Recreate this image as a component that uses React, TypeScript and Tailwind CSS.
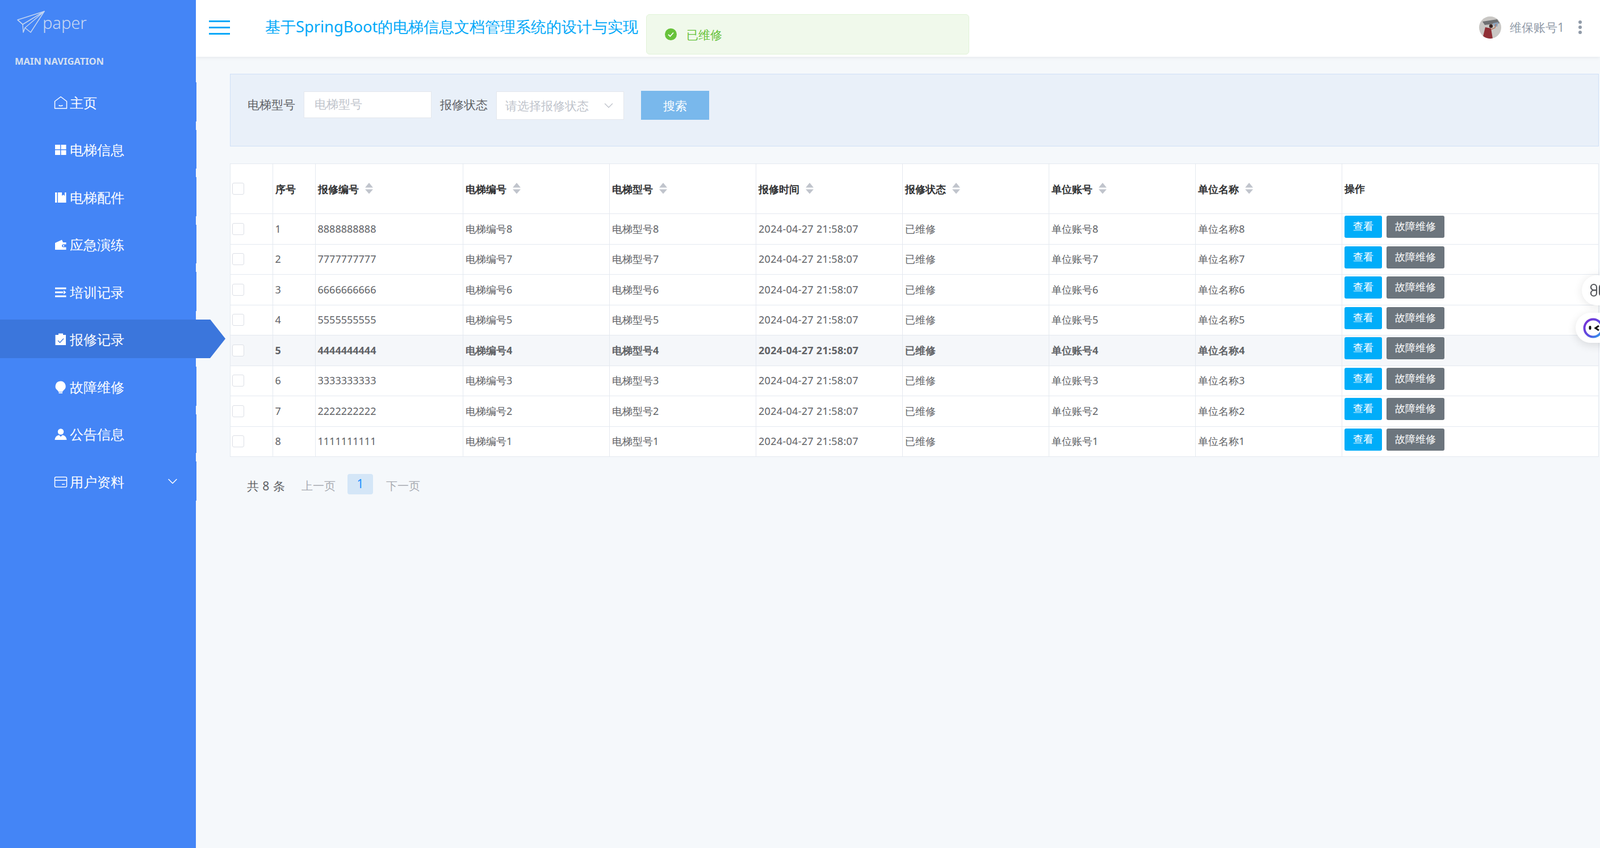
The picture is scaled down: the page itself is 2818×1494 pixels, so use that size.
import React from "react";
import { ChevronDown } from "lucide-react";

const Ico = ({ children }: { children: React.ReactNode }) => (
  <svg width="24" height="24" viewBox="0 0 24 24" className="shrink-0 mr-[4px]" fill="white">{children}</svg>
);

const icons: Record<string, React.ReactNode> = {
  home: (
    <Ico><path d="M12 1.5 L22.5 9.5 V22 H1.5 V9.5 Z" fill="none" stroke="white" strokeWidth="1.5" strokeLinejoin="round" /><path d="M8.5 16.5 q3.5 2.2 7 0" fill="none" stroke="white" strokeWidth="1.5" /></Ico>
  ),
  grid: (
    <Ico><rect x="2" y="3" width="9" height="8" /><rect x="12.5" y="3" width="9" height="8" /><rect x="2" y="12.5" width="9" height="8.5" /><rect x="12.5" y="12.5" width="9" height="8.5" /></Ico>
  ),
  book: (
    <Ico><rect x="2" y="3" width="3.5" height="18" /><path d="M7 3 H14 V9 L16.5 7 L19 9 V3 H21.5 V21 H7 Z" /></Ico>
  ),
  wallet: (
    <Ico><path d="M2 9 L14 3.5 L16 8 H21.5 V11.5 H16.5 a2.5 2.5 0 0 0 0 5 H21.5 V21 H2 Z" /><circle cx="17" cy="14" r="1.2" /></Ico>
  ),
  fold: (
    <Ico><rect x="2" y="3.5" width="19.5" height="3" /><rect x="2" y="10.5" width="14" height="3" /><rect x="2" y="17.5" width="19.5" height="3" /><path d="M17 8.5 L21.5 12 L17 15.5 Z" /></Ico>
  ),
  order: (
    <Ico><path d="M2.5 4 H8 V1.5 H16 V4 H21 V22 H2.5 Z" /><path d="M7 14 L10.5 17.5 L17 10.5" fill="none" stroke="#3b76dc" strokeWidth="1.3" /></Ico>
  ),
  bulb: (
    <Ico><path d="M11.5 1.5 a9 9 0 0 1 6 15.8 c-1.3 1.1 -2 2 -2.3 3.2 H8 c-0.4 -1.2 -1 -2.1 -2.3 -3.2 A9 9 0 0 1 11.5 1.5 Z" /><rect x="8.5" y="21.3" width="6.5" height="1.8" /></Ico>
  ),
  user: (
    <Ico><circle cx="12" cy="7.5" r="5.2" /><path d="M1.5 22 C2 16 6 14 9 13.5 L12 16.5 L15 13.5 C18 14 22 16 22.5 22 Z" /></Ico>
  ),
  card: (
    <Ico><rect x="1.5" y="3.5" width="21" height="17.5" rx="2" fill="none" stroke="white" strokeWidth="1.5" /><rect x="1.5" y="8.5" width="21" height="1.5" /><rect x="14" y="15.5" width="5" height="1.5" /></Ico>
  ),
};

const menu = [
  ["home", "主页"],
  ["grid", "电梯信息"],
  ["book", "电梯配件"],
  ["wallet", "应急演练"],
  ["fold", "培训记录"],
  ["order", "报修记录"],
  ["bulb", "故障维修"],
  ["user", "公告信息"],
  ["card", "用户资料"],
];

const Sort = () => (
  <svg width="14" height="20" viewBox="0 0 14 20" className="ml-[11px] shrink-0 -mt-[2px]" fill="#c0c4cc">
    <path d="M7 0 L14 8.5 H0 Z" />
    <path d="M0 11.5 H14 L7 19.5 Z" />
  </svg>
);

const heads: [string, boolean][] = [
  ["序号", false],
  ["报修编号", true],
  ["电梯编号", true],
  ["电梯型号", true],
  ["报修时间", true],
  ["报修状态", true],
  ["单位账号", true],
  ["单位名称", true],
];

const Check = () => <div className="w-[21px] h-[21px] rounded-[3px] border border-[#dcdfe6] bg-white" />;

const rows = [8, 7, 6, 5, 4, 3, 2, 1];

export default function App() {
  return (
    <div className="flex w-[2818px] h-[1494px] overflow-hidden bg-[#f5f8fb] font-['Noto_Sans','Noto_Sans_CJK_SC',sans-serif]">
      <aside className="relative z-20 w-[345px] shrink-0 bg-[#4485f6] text-white">
        <div className="h-[145px]">
          <div className="flex items-start pl-[30px] pt-[19px] h-[90px]">
            <svg width="50" height="40" viewBox="0 0 50 40" fill="none" stroke="#c4d5f0" strokeWidth="1.5" strokeLinejoin="round">
              <path d="M1 16 L48 1 L24 38 L14 30 L11 38 L10 24 Z" />
              <path d="M1 16 L10 24 L48 1 L14 30" />
            </svg>
            <span className="font-['Roboto'] font-light text-[29px] leading-[40px] text-[#c9d9f2] -ml-[5px] mt-[1px]">paper</span>
          </div>
          <div className="pl-[26px] text-[16.5px] leading-[20px] font-bold font-['Roboto'] text-[#d5e0f1] mt-[8px]">MAIN NAVIGATION</div>
        </div>
        {menu.map(([ic, label], i) => {
          const active = i === 5;
          return (
            <div
              key={label}
              className={
                active
                  ? "flex items-center h-[68.5px] mb-[15px] w-[397px] pl-[95px] pt-[3px] bg-[#3b76dc] [clip-path:polygon(0_0,370px_0,397px_50%,370px_100%,0_100%)]"
                  : "relative flex items-center h-[68.5px] mb-[15px] w-[346px] pl-[95px] pt-[3px] bg-[#4485f6]"
              }
            >
              {icons[ic]}
              <span className="text-[24px] leading-[32px]">{label}</span>
              {i === 8 && <ChevronDown className="absolute left-[290px] top-[21px]" size={28} strokeWidth={1.3} color="white" />}
            </div>
          );
        })}
      </aside>

      <div className="relative flex-1 min-w-0">
        <header className="relative z-10 h-[100px] bg-white shadow-[0_2px_6px_rgba(0,0,0,0.06)] flex items-center pl-[23px] pr-[32px]">
          <div className="flex flex-col gap-[8px] w-[37px] mb-[4px]">
            <div className="h-[3px] bg-[#00a8f8]" />
            <div className="h-[3px] bg-[#00a8f8]" />
            <div className="h-[3px] bg-[#00a8f8]" />
          </div>
          <div className="ml-[62px] text-[27.3px] leading-[40px] text-[#00a8f8] mb-[6px] whitespace-nowrap">基于SpringBoot的电梯信息文档管理系统的设计与实现</div>
          <div className="ml-auto flex items-center mb-[4px]">
            <svg width="39" height="39" viewBox="0 0 39 39" className="rounded-full">
              <rect width="39" height="39" fill="#c9c7c4" />
              <path d="M6 9 L32 5 L36 12 L10 15 Z" fill="#6f7072" />
              <path d="M24 12 L34 10 L32 18 L26 17 Z" fill="#8ba3bd" />
              <path d="M6 39 L11 19 L21 21 L24 39 Z" fill="#8f2f35" />
              <circle cx="21" cy="17" r="3.2" fill="#3a2420" />
              <path d="M21 23 L28 20 L30 13" stroke="#b77a60" strokeWidth="1.5" fill="none" />
            </svg>
            <span className="ml-[15px] text-[21px] leading-[28px] text-[#909aa8]">维保账号1</span>
            <div className="ml-[25px] flex flex-col gap-[3px]">
              <div className="w-[6px] h-[6px] rounded-full bg-[#909aa8]" />
              <div className="w-[6px] h-[6px] rounded-full bg-[#909aa8]" />
              <div className="w-[6px] h-[6px] rounded-full bg-[#909aa8]" />
            </div>
          </div>
        </header>

        <div className="absolute z-30 left-[793px] top-[25px] w-[569px] h-[71px] rounded-[6px] bg-[#f0f9eb] border border-[#e1f3d8] flex items-center pl-[32px]">
          <svg width="21" height="21" viewBox="0 0 21 21">
            <circle cx="10.5" cy="10.5" r="10.5" fill="#67c23a" />
            <path d="M6 10.8 L9.3 14 L15 7.5" fill="none" stroke="white" strokeWidth="1.8" />
          </svg>
          <span className="ml-[17px] text-[21px] leading-[28px] text-[#67c23a]">已维修</span>
        </div>

        <main className="pl-[60px] pr-[2px] pt-[30px]">
          <div className="h-[128px] bg-[#e9f0f9] border border-[#cfdff7] flex items-start pl-[30px] pt-[30px]">
            <span className="text-[21px] leading-[47px] text-[#606266]">电梯型号</span>
            <div className="ml-[15px] w-[225px] h-[47px] bg-white border border-[#e4e7ed] pl-[18px] text-[21px] leading-[43px] text-[#c0c4cc]">电梯型号</div>
            <span className="ml-[15px] text-[21px] leading-[47px] text-[#606266]">报修状态</span>
            <div className="ml-[15px] w-[225px] h-[50px] bg-white border border-[#e4e7ed] pl-[15px] pr-[13px] flex items-center justify-between text-[21px] text-[#c0c4cc]">
              <span className="leading-[28px]">请选择报修状态</span>
              <ChevronDown size={26} strokeWidth={1.3} />
            </div>
            <button className="ml-[30px] w-[120px] h-[51px] -mt-[1px] bg-[#79b8ec] text-white text-[21px] leading-[28px]">搜索</button>
          </div>

          <table className="mt-[30px] w-[2411px] table-fixed border-collapse bg-white border border-[#e4e9f0] text-[18px] text-[#606266]">
            <colgroup>
              <col className="w-[74.5px]" />
              <col className="w-[75px]" />
              <col className="w-[260.5px]" />
              <col className="w-[258px]" />
              <col className="w-[258px]" />
              <col className="w-[258px]" />
              <col className="w-[258px]" />
              <col className="w-[258px]" />
              <col className="w-[258px]" />
              <col />
            </colgroup>
            <thead>
              <tr className="h-[88px] text-[#303133]">
                <th className="border border-[#e4e9f0] pl-[3px] text-left align-middle"><Check /></th>
                {heads.map(([h, sort]) => (
                  <th key={h} className="border border-[#e4e9f0] pl-[4px] text-left align-middle font-bold">
                    <div className="flex items-center">
                      <span className="leading-[24px]">{h}</span>
                      {sort && <Sort />}
                    </div>
                  </th>
                ))}
                <th className="border border-[#e4e9f0] pl-[4px] text-left align-middle font-bold">操作</th>
              </tr>
            </thead>
            <tbody>
              {rows.map((n, i) => {
                const bold = i === 4;
                const td = "border border-[#e4e9f0] pl-[4px] align-middle whitespace-nowrap";
                return (
                  <tr key={n} className={bold ? "h-[53.5px] bg-[#f5f7fa] font-bold" : "h-[53.5px]"}>
                    <td className="border border-[#e4e9f0] pl-[3px] align-middle"><Check /></td>
                    <td className={td}>{i + 1}</td>
                    <td className={td}>{String(n).repeat(10)}</td>
                    <td className={td}>电梯编号{n}</td>
                    <td className={td}>电梯型号{n}</td>
                    <td className={td + " tracking-[0.3px]"}>2024-04-27 21:58:07</td>
                    <td className={td}>已维修</td>
                    <td className={td}>单位账号{n}</td>
                    <td className={td}>单位名称{n}</td>
                    <td className="border border-[#e4e9f0] pl-[4px] align-top pt-[3px] font-normal">
                      <div className="flex gap-[8px]">
                        <button className="w-[66px] h-[39px] pb-[3px] rounded-[3px] bg-[#00adf9] text-white text-[18px] leading-[24px]">查看</button>
                        <button className="w-[102px] h-[39px] pb-[3px] rounded-[3px] bg-[#6c757d] text-white text-[18px] leading-[24px]">故障维修</button>
                      </div>
                    </td>
                  </tr>
                );
              })}
            </tbody>
          </table>

          <div className="flex items-start pl-[30px] pt-[30px] text-[21px] leading-[28px]">
            <span className="text-[#606266] mt-[7px] whitespace-pre tracking-[0.4px]">共 8 条</span>
            <span className="ml-[29px] mt-[7px] text-[20px] text-[#a8abb2]">上一页</span>
            <span className="ml-[21px] w-[45px] h-[36px] rounded-[4px] bg-[#d4e6f7] text-[#1890ff] text-center leading-[34px]">1</span>
            <span className="ml-[23px] mt-[7px] text-[20px] text-[#a8abb2]">下一页</span>
          </div>
        </main>

        <div className="absolute z-30 left-[2441px] top-[485px] w-[80px] h-[53px] rounded-l-[27px] bg-white shadow-[0_2px_16px_rgba(0,0,0,0.1)] pl-[15px] pt-[14px]">
          <svg width="28" height="25" viewBox="0 0 28 25" fill="none" stroke="#56585c" strokeWidth="2.2">
            <path d="M12 12 H6 a5 5 0 1 1 5 -5 V12" />
            <path d="M12 12.5 H6 a5 5 0 1 0 5 5 V12.5" />
            <path d="M15 12 H21 a5 5 0 1 0 -5 -5 V12" />
            <path d="M15 12.5 H21 a5 5 0 1 1 -5 5 V12.5" />
          </svg>
        </div>
        <div className="absolute z-30 left-[2430px] top-[551px] w-[90px] h-[53px] rounded-l-[27px] bg-white shadow-[0_4px_16px_rgba(0,0,0,0.12)] pl-[13px] pt-[9px]">
          <svg width="36" height="36" viewBox="0 0 36 36">
            <defs>
              <linearGradient id="ring" x1="0" y1="0" x2="1" y2="1">
                <stop offset="0" stopColor="#7a2fd6" />
                <stop offset="0.6" stopColor="#5a4fe0" />
                <stop offset="1" stopColor="#26a8f0" />
              </linearGradient>
            </defs>
            <circle cx="18" cy="18" r="15.5" fill="white" stroke="url(#ring)" strokeWidth="4" />
            <rect x="10.5" y="14" width="4" height="7" rx="2" fill="#111" />
            <path d="M28 14 L22 18 L28 22" fill="none" stroke="#111" strokeWidth="3" />
          </svg>
        </div>
      </div>
    </div>
  );
}
